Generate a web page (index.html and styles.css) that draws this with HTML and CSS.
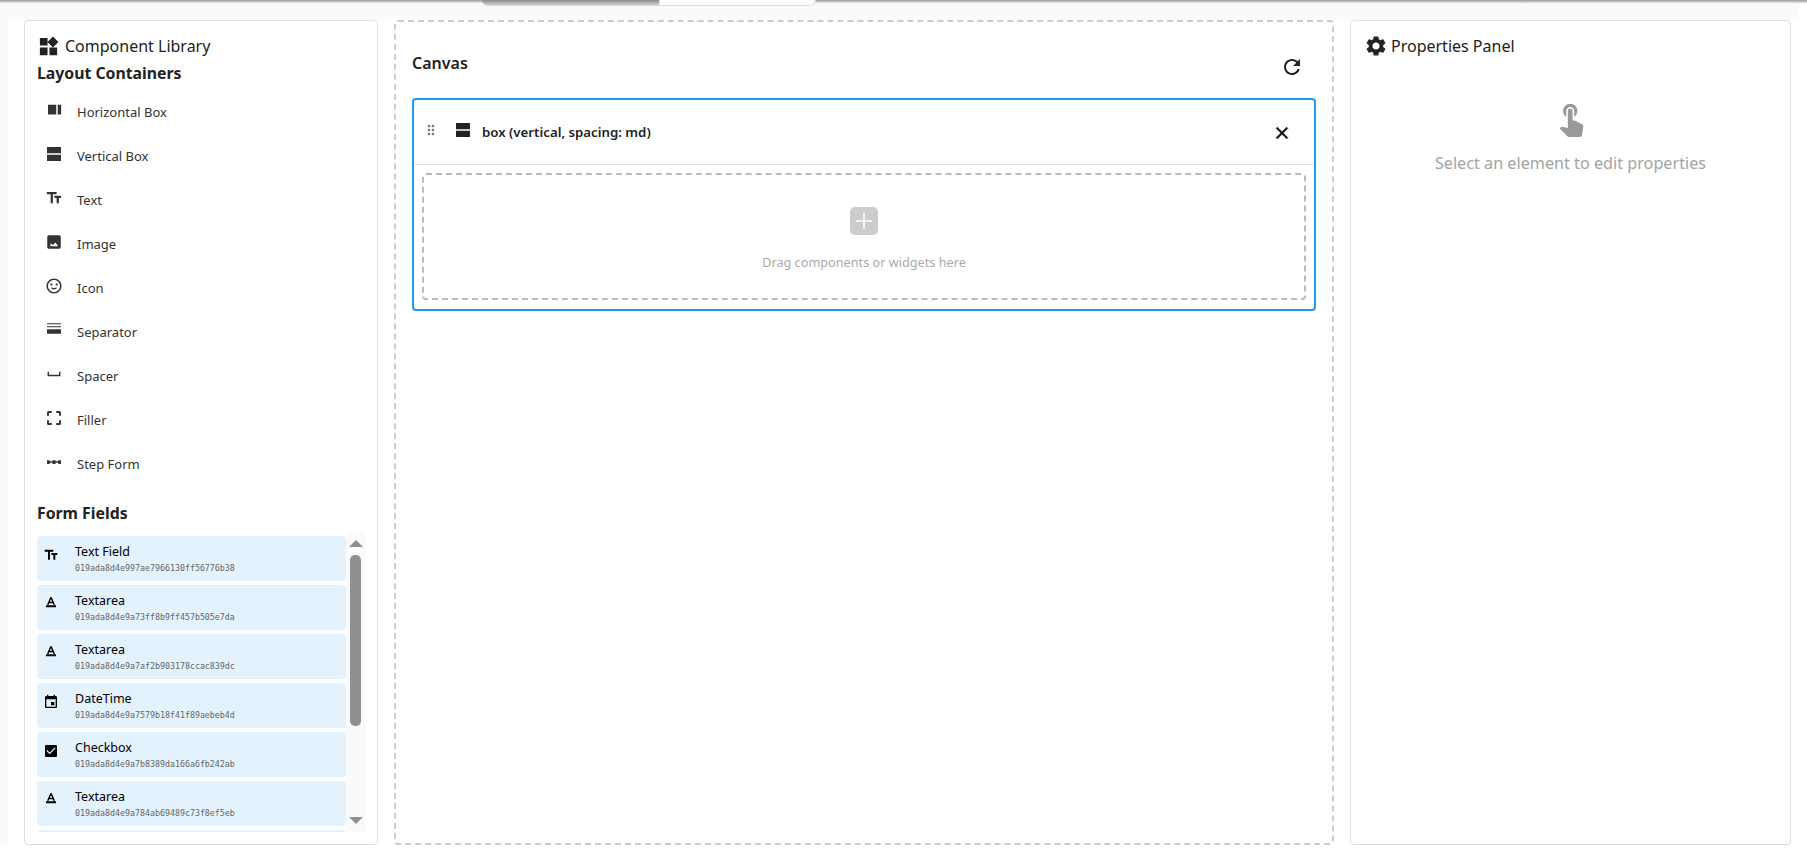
FILE: index.html
```html
<!DOCTYPE html>
<html lang="en">
<head>
<meta charset="utf-8">
<title>Form Builder</title>
<link rel="stylesheet" href="styles.css">
</head>
<body>
<svg class="defs" width="0" height="0" aria-hidden="true">
  <symbol id="i-widgets" viewBox="0 0 24 24"><path d="M13 13v8h8v-8h-8zM3 21h8v-8H3v8zM3 3v8h8V3H3zm13.66-1.31L11 7.34 16.66 13l5.66-5.66-5.66-5.65z"/></symbol>
  <symbol id="i-gear" viewBox="0 0 24 24"><path d="M19.14 12.94c.04-.3.06-.61.06-.94 0-.32-.02-.64-.07-.94l2.03-1.58c.18-.14.23-.41.12-.61l-1.92-3.32c-.12-.22-.37-.29-.59-.22l-2.39.96c-.5-.38-1.03-.7-1.62-.94l-.36-2.54c-.04-.24-.24-.41-.48-.41h-3.84c-.24 0-.43.17-.47.41l-.36 2.54c-.59.24-1.13.57-1.62.94l-2.39-.96c-.22-.08-.47 0-.59.22L2.74 8.87c-.12.21-.08.47.12.61l2.03 1.58c-.05.3-.09.63-.09.94s.02.64.07.94l-2.03 1.58c-.18.14-.23.41-.12.61l1.92 3.32c.12.22.37.29.59.22l2.39-.96c.5.38 1.03.7 1.62.94l.36 2.54c.05.24.24.41.48.41h3.84c.24 0 .44-.17.47-.41l.36-2.54c.59-.24 1.13-.56 1.62-.94l2.39.96c.22.08.47 0 .59-.22l1.92-3.32c.12-.22.07-.47-.12-.61l-2.01-1.58zM12 15.6c-1.98 0-3.6-1.62-3.6-3.6s1.62-3.6 3.6-3.6 3.6 1.62 3.6 3.6-1.62 3.6-3.6 3.6z"/></symbol>
  <symbol id="i-hbox" viewBox="0 0 24 24"><path d="M4 5h11v13H4zM17 5h4.500v13H17z"/></symbol>
  <symbol id="i-vbox" viewBox="0 0 24 24"><path d="M2.700 2.700h18.600v8.300H2.700zM2.700 13h18.600v8.300H2.700z"/></symbol>
  <symbol id="i-text" viewBox="0 0 24 24"><path d="M2.500 4v3h5v12h3V7h5V4h-13zm19 5h-9v3h3v7h3v-7h3V9z"/></symbol>
  <symbol id="i-image" viewBox="0 0 24 24"><path d="M21 19V5c0-1.100-.9-2-2-2H5c-1.100 0-2 .9-2 2v14c0 1.100.9 2 2 2h14c1.100 0 2-.9 2-2zM8 13.500l2 2.500 2-1.500 2-2 3.500 5h-11z" fill-rule="evenodd"/></symbol>
  <symbol id="i-face" viewBox="0 0 24 24"><path d="M11.990 2C6.470 2 2 6.480 2 12s4.470 10 9.990 10C17.520 22 22 17.520 22 12S17.520 2 11.990 2zM12 20c-4.420 0-8-3.580-8-8s3.580-8 8-8 8 3.580 8 8-3.580 8-8 8z"/><circle cx="8.500" cy="10" r="1.500"/><circle cx="15.500" cy="10" r="1.500"/><path d="M12 16.500c-1.700 0-3.100-.7-3.900-1.900l1.200-1.100c.6.800 1.600 1.300 2.700 1.300s2.100-.5 2.700-1.300l1.200 1.100C15.100 15.800 13.700 16.500 12 16.500z"/></symbol>
  <symbol id="i-sep" viewBox="0 0 24 24"><path d="M2.700 3h18.600v1.300H2.700zM2.700 7h18.600v1.300H2.700zM2.700 11h18.600v6H2.700z"/></symbol>
  <symbol id="i-space" viewBox="0 0 24 24"><path d="M18.700 9v4H5.300V9H3.400v6h17.200V9z"/></symbol>
  <symbol id="i-filler" viewBox="0 0 24 24"><path d="M2.700 9V4.700a2 2 0 0 1 2-2H9v2.600H5.300V9zM15 2.700h4.300a2 2 0 0 1 2 2V9h-2.600V5.300H15zM21.300 15v4.300a2 2 0 0 1-2 2H15v-2.600h3.700V15zM9 21.300H4.700a2 2 0 0 1-2-2V15h2.600v3.700H9z"/></symbol>
  <symbol id="i-step" viewBox="0 0 24 24"><path d="M2.700 9.500H6.300v1.500H10V9.500h4V11h3.700V9.500h3.600v5h-3.600V13H14v1.500h-4V13H6.300v1.500H2.700z"/></symbol>
  <symbol id="i-drag" viewBox="0 0 24 24"><path d="M11 18c0 1.100-.9 2-2 2s-2-.9-2-2 .9-2 2-2 2 .9 2 2zm-2-8c-1.100 0-2 .9-2 2s.9 2 2 2 2-.9 2-2-.9-2-2-2zm0-6c-1.100 0-2 .9-2 2s.9 2 2 2 2-.9 2-2-.9-2-2-2zm6 4c1.100 0 2-.9 2-2s-.9-2-2-2-2 .9-2 2 .9 2 2 2zm0 2c-1.100 0-2 .9-2 2s.9 2 2 2 2-.9 2-2-.9-2-2-2zm0 6c-1.100 0-2 .9-2 2s.9 2 2 2 2-.9 2-2-.9-2-2-2z"/></symbol>
  <symbol id="i-refresh" viewBox="0 0 24 24"><path d="M17.650 6.350C16.200 4.900 14.210 4 12 4c-4.420 0-7.990 3.580-7.990 8s3.570 8 7.990 8c3.730 0 6.840-2.550 7.730-6h-2.080c-.82 2.330-3.040 4-5.650 4-3.310 0-6-2.690-6-6s2.690-6 6-6c1.660 0 3.140.69 4.220 1.780L13 11h7V4l-2.350 2.350z"/></symbol>
  <symbol id="i-close" viewBox="0 0 24 24"><path d="M19 6.410L17.590 5 12 10.590 6.410 5 5 6.410 10.590 12 5 17.590 6.410 19 12 13.410 17.590 19 19 17.590 13.410 12z"/></symbol>
  <symbol id="i-touch" viewBox="0 0 24 24"><path d="M9 11.240V7.500C9 6.120 10.120 5 11.500 5S14 6.120 14 7.500v3.740c1.210-.81 2-2.180 2-3.740C16 5.010 13.990 3 11.500 3S7 5.010 7 7.500c0 1.560.79 2.930 2 3.740zm9.840 4.630l-4.540-2.260c-.17-.07-.35-.11-.54-.11H13v-6c0-.83-.67-1.500-1.500-1.500S10 6.670 10 7.500v10.740l-3.430-.72c-.08-.01-.15-.03-.24-.03-.31 0-.59.13-.79.33l-.79.8 4.940 4.940c.27.27.65.44 1.060.44h6.790c.75 0 1.330-.55 1.440-1.280l.75-5.270c.01-.07.02-.14.02-.2 0-.62-.38-1.160-.91-1.380z"/></symbol>
  <symbol id="i-area" viewBox="0 0 24 24"><path fill-rule="evenodd" d="M4.500 14h15v3h-15zM10.800 2h2.400L18 13h-2.600l-.8-2.200H9.400L8.600 13H6zM10.300 8.800h3.400L12 4.500z"/></symbol>
  <symbol id="i-date" viewBox="0 0 24 24"><path d="M17 12h-5v5h5v-5zM16 1v2H8V1H6v2H5c-1.110 0-1.990.9-1.990 2L3 19c0 1.100.89 2 2 2h14c1.100 0 2-.9 2-2V5c0-1.100-.9-2-2-2h-1V1h-2zm3 18H5V8h14v11z"/></symbol>
  <symbol id="i-check" viewBox="0 0 24 24"><path d="M19 3H5c-1.110 0-2 .9-2 2v14c0 1.100.89 2 2 2h14c1.110 0 2-.9 2-2V5c0-1.100-.89-2-2-2zm-9 14l-5-5 1.410-1.410L10 14.170l7.590-7.590L19 8l-9 9z"/></symbol>
</svg>

<div class="chrome"><div class="chrome-tab"><span class="tab-dark"></span><span class="tab-light"></span></div></div>

<main class="page">
  <aside class="panel library">
    <h2 class="panel-title"><svg class="title-icon"><use href="#i-widgets"/></svg>Component Library</h2>
    <h3 class="section-title">Layout Containers</h3>
    <ul class="palette">
      <li class="palette-item"><svg class="item-icon"><use href="#i-hbox"/></svg><span>Horizontal Box</span></li>
      <li class="palette-item"><svg class="item-icon"><use href="#i-vbox"/></svg><span>Vertical Box</span></li>
      <li class="palette-item"><svg class="item-icon"><use href="#i-text"/></svg><span>Text</span></li>
      <li class="palette-item"><svg class="item-icon"><use href="#i-image"/></svg><span>Image</span></li>
      <li class="palette-item"><svg class="item-icon"><use href="#i-face"/></svg><span>Icon</span></li>
      <li class="palette-item"><svg class="item-icon"><use href="#i-sep"/></svg><span>Separator</span></li>
      <li class="palette-item"><svg class="item-icon"><use href="#i-space"/></svg><span>Spacer</span></li>
      <li class="palette-item"><svg class="item-icon"><use href="#i-filler"/></svg><span>Filler</span></li>
      <li class="palette-item"><svg class="item-icon"><use href="#i-step"/></svg><span>Step Form</span></li>
    </ul>
    <h3 class="section-title fields-title">Form Fields</h3>
    <div class="fields">
      <ul class="field-list">
        <li class="field"><svg class="field-icon"><use href="#i-text"/></svg><div class="field-body"><div class="field-name">Text Field</div><div class="field-id">019ada8d4e997ae7966130ff56776b38</div></div></li>
        <li class="field"><svg class="field-icon"><use href="#i-area"/></svg><div class="field-body"><div class="field-name">Textarea</div><div class="field-id">019ada8d4e9a73ff8b9ff457b505e7da</div></div></li>
        <li class="field"><svg class="field-icon"><use href="#i-area"/></svg><div class="field-body"><div class="field-name">Textarea</div><div class="field-id">019ada8d4e9a7af2b903178ccac839dc</div></div></li>
        <li class="field"><svg class="field-icon"><use href="#i-date"/></svg><div class="field-body"><div class="field-name">DateTime</div><div class="field-id">019ada8d4e9a7579b18f41f89aebeb4d</div></div></li>
        <li class="field"><svg class="field-icon"><use href="#i-check"/></svg><div class="field-body"><div class="field-name">Checkbox</div><div class="field-id">019ada8d4e9a7b8389da166a6fb242ab</div></div></li>
        <li class="field"><svg class="field-icon"><use href="#i-area"/></svg><div class="field-body"><div class="field-name">Textarea</div><div class="field-id">019ada8d4e9a784ab69489c73f8ef5eb</div></div></li>
        <li class="field"></li>
      </ul>
      <div class="scrollbar">
        <span class="arrow arrow-up"></span>
        <span class="thumb"></span>
        <span class="arrow arrow-down"></span>
      </div>
    </div>
  </aside>

  <section class="canvas">
    <header class="canvas-head">
      <h2 class="canvas-title">Canvas</h2>
      <svg class="refresh"><use href="#i-refresh"/></svg>
    </header>
    <div class="box">
      <div class="box-head">
        <svg class="drag"><use href="#i-drag"/></svg>
        <svg class="box-icon"><use href="#i-vbox"/></svg>
        <span class="box-label">box (vertical, spacing: md)</span>
        <svg class="close"><use href="#i-close"/></svg>
      </div>
      <div class="dropzone">
        <svg class="add" viewBox="0 0 28 28"><rect class="add-bg" width="28" height="28" rx="5"/><path class="add-plus" d="M14 6v16M6 14h16"/></svg>
        <p class="drop-text">Drag components or widgets here</p>
      </div>
    </div>
  </section>

  <aside class="panel properties">
    <h2 class="panel-title props-title"><svg class="title-icon gear"><use href="#i-gear"/></svg>Properties Panel</h2>
    <div class="empty">
      <svg class="touch"><use href="#i-touch"/></svg>
      <p class="empty-text">Select an element to edit properties</p>
    </div>
  </aside>
</main>
</body>
</html>
```
FILE: styles.css
```css
* { box-sizing: border-box; }
html, body { margin: 0; height: 100%; }
body {
  overflow: hidden;
  background: #fff;
  color: #1f1f1f;
  font-family: "Noto Sans", "Open Sans", sans-serif;
  position: relative;
}
.defs { position: absolute; }
svg { fill: currentColor; display: block; flex: none; }
h2, h3, p, ul { margin: 0; padding: 0; list-style: none; }

.chrome { height: 3px; background: linear-gradient(#999, #e6e6e6); position: relative; }
.chrome-tab {
  position: absolute; left: 482px; top: 0; width: 334px; height: 6px;
  display: flex; border-radius: 0 0 8px 8px; overflow: hidden;
}
.tab-dark { width: 177px; background: linear-gradient(#8c8c8c, #e0e0e0); }
.tab-light { flex: 1; background: #fff; border: 1px solid #e0e0e0; border-top: 0; border-radius: 0 0 8px 0; }

.page {
  display: grid;
  grid-template-columns: 354px 940px 441px;
  column-gap: 16px;
  height: 825px;
  margin-top: 17px;
  margin-left: 8px;
  padding-left: 16px;
  box-shadow: -8px 0 0 #fafafa, -8px -20px 0 #fafafa;
}
.panel {
  border: 1px solid #ddd;
  border-radius: 4px;
  background: #fff;
  overflow: hidden;
}
.library { padding: 13px 12px 0; }
.panel-title {
  display: flex; align-items: center; gap: 5px;
  font-size: 16px; font-weight: 400; line-height: 24px; color: #222;
}
.title-icon { width: 23px; height: 23px; }
.section-title { font-size: 15.800px; font-weight: 700; line-height: 22px; color: #222; margin-top: 4px; }
.palette { margin-top: 4px; }
.palette-item {
  display: flex; align-items: flex-start; height: 44px;
  padding: 11px 0 0 8px;
  font-size: 13px; line-height: 24px; color: #333;
}
.palette-item span { margin-left: 14px; margin-top: 1px; }
.item-icon { width: 18px; height: 18px; margin-top: 2px; }
.fields-title { margin-top: 18px; }

.fields { display: flex; height: 300px; margin-top: 8px; margin-right: -1px; }
.field-list { width: 309px; height: 300px; overflow: hidden; padding-top: 4px; display: flex; flex-direction: column; gap: 4px; flex: none; }
.field {
  display: flex; align-items: flex-start; flex: none; height: 45px;
  background: #e3f2fd; border-radius: 4px; padding: 7px 0 0 6px; color: #000;
}
.field-icon { width: 16px; height: 16px; margin: 4px 0 0 0; }
.field-body { margin-left: 16px; }
.field-name { font-size: 12.500px; line-height: 18px; }
.field-id { font-family: "DejaVu Sans Mono", "Liberation Mono", monospace; font-size: 8.300px; line-height: 13px; color: #666; margin-top: 1px; }
.scrollbar { width: 19px; background: #fafafa; display: flex; flex-direction: column; align-items: center; height: 300px; padding: 8px 0; }
.arrow { width: 0; height: 0; border-left: 7px solid transparent; border-right: 7px solid transparent; }
.arrow-up { border-bottom: 7px solid #8f8f8f; }
.arrow-down { border-top: 7px solid #8f8f8f; margin-top: auto; }
.thumb { width: 11px; height: 171px; background: #8f8f8f; border-radius: 5px; margin-top: 8px; }

.canvas {
  border: 2px dashed #ccc;
  border-radius: 4px;
  padding: 16px;
  height: 825px;
}
.canvas-head { display: flex; align-items: center; justify-content: space-between; height: 44px; margin-bottom: 16px; }
.canvas-title { font-size: 16px; font-weight: 600; color: #222; margin-top: 6px; line-height: 24px; }
.refresh { width: 24px; height: 24px; margin-top: 14px; margin-right: 12px; color: #222; }
.box { border: 2px solid #2196f3; border-radius: 4px; height: 213px; }
.box-head {
  display: flex; align-items: center; height: 65px; border-bottom: 1px solid #e0e0e0;
  padding-left: 9px; padding-right: 22px;
}
.drag { width: 16px; height: 16px; color: #777; margin-top: -4px; }
.box-icon { width: 18px; height: 18px; margin-left: 15px; margin-top: -4px; color: #222; }
.box-label { margin-left: 10px; font-size: 13.250px; font-weight: 600; color: #222; }
.close { width: 20px; height: 20px; margin-left: auto; margin-top: 2px; color: #111; stroke: #111; stroke-width: .8; }
.dropzone {
  margin: 8px 8px 9px 8px; height: 127px;
  border: 2px dashed #bbb; border-radius: 4px;
  display: flex; flex-direction: column; align-items: center; padding-top: 32px;
}
.add { width: 28px; height: 28px; }
.add-bg { fill: #ccc; }
.add-plus { stroke: #fff; stroke-width: 1.500; fill: none; }
.drop-text { font-size: 12.700px; line-height: 20px; color: #aaa; margin-top: 17px; }

.properties { padding: 13px 13px 0; }
.props-title { gap: 3px; }
.gear { width: 24px; height: 24px; }
.empty { display: flex; flex-direction: column; align-items: center; margin-top: 41px; }
.touch { width: 38px; height: 38px; color: #999; }
.empty-text { font-size: 16.200px; line-height: 24px; color: #a3a3a3; margin-top: 14px; }
```
